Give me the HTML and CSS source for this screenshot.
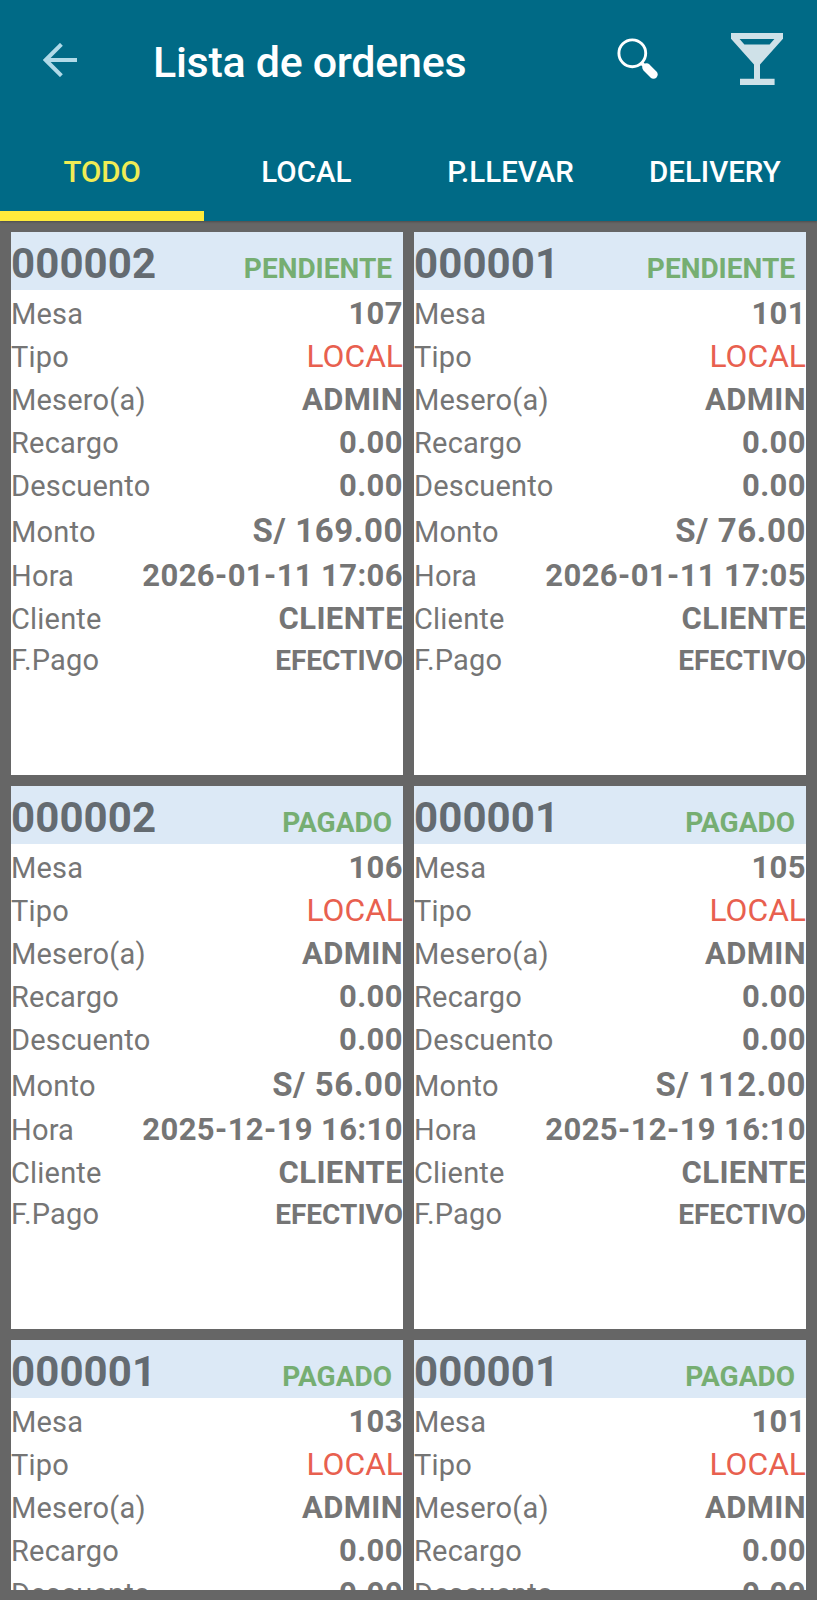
FILE: index.html
```html
<!DOCTYPE html>
<html lang="es">
<head>
    <meta charset="UTF-8">
    <meta name="viewport" content="width=device-width, initial-scale=1.0">
    <title>Lista de ordenes</title>
    <link rel="stylesheet" href="styles.css">
</head>
<body>
    <header class="header">
        <div class="toolbar">
            <button class="icon-btn back" type="button" aria-label="Volver">
                <svg width="34" height="34" viewBox="0 0 34 34" fill="none" stroke="#b0dae8" stroke-width="4">
                    <path d="M34 17H3M18.4 1.3L2.7 17l15.7 15.7"/>
                </svg>
            </button>
            <h1>Lista de ordenes</h1>
            <button class="icon-btn search" type="button" aria-label="Buscar">
                <svg width="42" height="42" viewBox="0 0 42 42" fill="none" stroke="#fff">
                    <circle cx="15.3" cy="15.3" r="13.4" stroke-width="2.9"/>
                    <path d="M24 24.5l5 5" stroke-width="3.8"/>
                    <path d="M29.5 29.5l7 7" stroke-width="8.4" stroke-linecap="round"/>
                </svg>
            </button>
            <button class="icon-btn bar" type="button" aria-label="Bar">
                <svg width="52" height="52" viewBox="0 0 52 52" fill="#cfe1e8">
                    <path fill-rule="evenodd" d="M0 0h52v5.8L29 31.5v14.2h14.6V52H9V45.7h14V31.5L0 5.8zM8.6 6l4.8 5.6h25.2L43.4 6z"/>
                </svg>
            </button>
        </div>
        <nav class="tabs">
            <a class="tab active">TODO</a>
            <a class="tab">LOCAL</a>
            <a class="tab">P.LLEVAR</a>
            <a class="tab">DELIVERY</a>
        </nav>
    </header>
    <main class="orders" id="orders"></main>

    <script>
        const orders = [
            { numero: '000002', estado: 'PENDIENTE', mesa: '107', monto: '169.00', hora: '2026-01-11 17:06' },
            { numero: '000001', estado: 'PENDIENTE', mesa: '101', monto: '76.00', hora: '2026-01-11 17:05' },
            { numero: '000002', estado: 'PAGADO', mesa: '106', monto: '56.00', hora: '2025-12-19 16:10' },
            { numero: '000001', estado: 'PAGADO', mesa: '105', monto: '112.00', hora: '2025-12-19 16:10' },
            { numero: '000001', estado: 'PAGADO', mesa: '103' },
            { numero: '000001', estado: 'PAGADO', mesa: '101' }
        ];

        function row(name, label, value) {
            return `<div class="row ${name}"><span class="label">${label}</span><span class="value">${value}</span></div>`;
        }

        document.getElementById('orders').innerHTML = orders.map(o => `
            <article class="card">
                <div class="card-head">
                    <span class="number">${o.numero}</span>
                    <span class="status">${o.estado}</span>
                </div>
                <div class="card-body">
                    ${row('mesa', 'Mesa', o.mesa)}
                    ${row('tipo', 'Tipo', 'LOCAL')}
                    ${row('mesero', 'Mesero(a)', 'ADMIN')}
                    ${row('recargo', 'Recargo', '0.00')}
                    ${row('descuento', 'Descuento', '0.00')}
                    ${o.monto ? row('monto', 'Monto', 'S/ ' + o.monto) : ''}
                    ${o.hora ? row('hora', 'Hora', o.hora) + row('cliente', 'Cliente', 'CLIENTE') + row('pago', 'F.Pago', 'EFECTIVO') : ''}
                </div>
            </article>`).join('');
    </script>
</body>
</html>
```

FILE: styles.css
```css
* {
    box-sizing: border-box;
}
body {
    font-family: Roboto, "Liberation Sans", sans-serif;
    background-color: #666;
    color: #757575;
    margin: 0;
    height: 1600px;
    overflow: hidden;
    display: flex;
    flex-direction: column;
}
.header {
    background-color: #006a86;
    height: 221px;
    flex: none;
    box-shadow: 0 1px 2px rgba(0, 0, 0, 0.25);
}
.toolbar {
    display: flex;
    height: 123px;
    padding: 0 34px 0 43px;
}
.toolbar h1 {
    margin: 0 0 0 76px;
    color: #fff;
    font-size: 43px;
    font-weight: 500;
    letter-spacing: -0.3px;
    line-height: 124px;
    flex: 1;
    white-space: nowrap;
}
.icon-btn {
    background: none;
    border: none;
    padding: 0;
    display: block;
    align-self: flex-start;
    cursor: pointer;
}
.icon-btn svg {
    display: block;
}
.back {
    margin-top: 43px;
}
.search {
    margin-top: 38px;
}
.bar {
    margin: 33px 0 0 72px;
}
.tabs {
    display: grid;
    grid-template-columns: repeat(4, 1fr);
    height: 98px;
}
.tab {
    color: #fff;
    font-size: 29.5px;
    font-weight: 500;
    line-height: 98px;
    text-align: center;
}
.tab.active {
    color: #f0ec55;
    box-shadow: inset 0 -10px #ffeb3b;
}
.orders {
    display: grid;
    grid-template-columns: 1fr 1fr;
    grid-template-rows: 543px 543px 250px;
    gap: 11px;
    padding: 11px;
}
.card {
    background-color: #fff;
    overflow: hidden;
}
.card-head {
    background-color: #dce9f6;
    height: 58px;
    padding-right: 11px;
    display: flex;
    justify-content: space-between;
    align-items: baseline;
    line-height: 63px;
}
.number {
    color: #646b71;
    font-size: 42px;
    font-weight: bold;
    letter-spacing: 0.1px;
}
.status {
    color: #76ae72;
    font-size: 28px;
    font-weight: bold;
}
.card-body {
    padding-top: 2px;
}
.row {
    display: flex;
    justify-content: space-between;
    align-items: baseline;
    height: 43.1px;
    line-height: 43.1px;
    white-space: nowrap;
}
.label {
    font-size: 29px;
    letter-spacing: 0.2px;
}
.value {
    font-size: 31px;
    font-weight: bold;
    letter-spacing: 0.4px;
}
.tipo .value {
    color: #e8604f;
    font-size: 31.8px;
    font-weight: normal;
    letter-spacing: 0;
}
.descuento {
    height: 44.1px;
}
.monto {
    height: 45.6px;
    line-height: 45.6px;
}
.monto .value {
    font-size: 33px;
    letter-spacing: 0.6px;
}
.hora {
    height: 44px;
    line-height: 44px;
}
.cliente {
    height: 41.4px;
    line-height: 41.4px;
}
.pago {
    height: 42px;
    line-height: 42px;
}
.pago .value {
    font-size: 28px;
    letter-spacing: 0;
}
```
